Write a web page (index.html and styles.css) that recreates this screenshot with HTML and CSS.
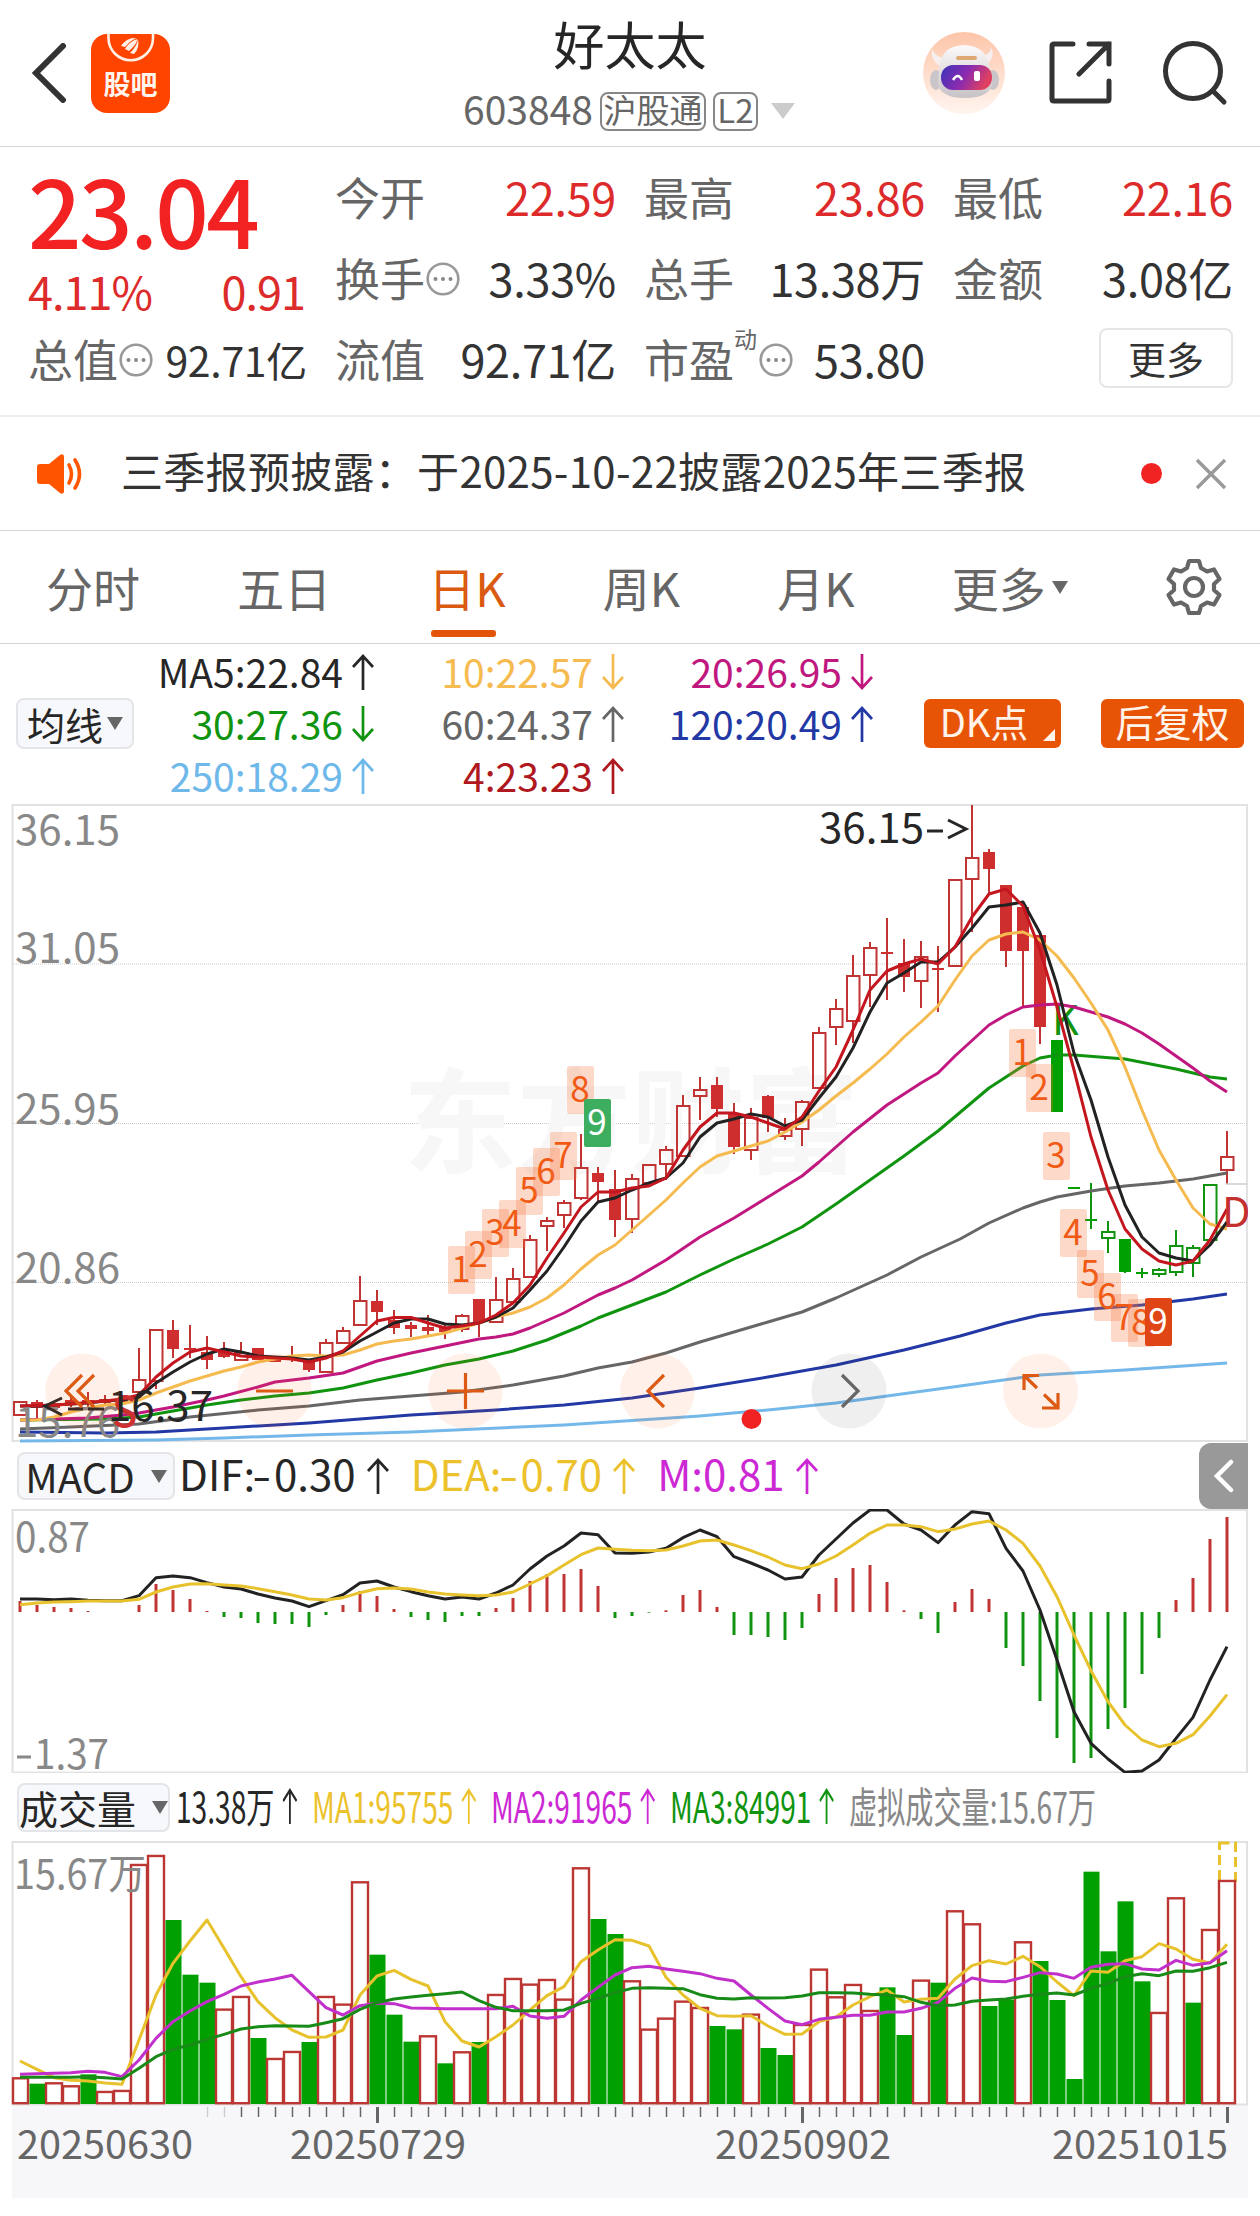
FILE: index.html
```
<!DOCTYPE html>
<html lang="zh-CN">
<head>
    <meta charset="UTF-8">
    <meta name="viewport" content="width=device-width, initial-scale=1.0">
    <title>好太太 603848</title>
    <link rel="stylesheet" href="styles.css">
</head>
<body>
    <svg class="defs" width="0" height="0">
        <symbol id="up" viewBox="0 0 22 36"><path d="M11 36V2M1 13L11 2L21 13" fill="none" stroke="currentColor" stroke-width="2.7"/></symbol>
        <symbol id="down" viewBox="0 0 22 36"><path d="M11 0V34M1 23L11 34L21 23" fill="none" stroke="currentColor" stroke-width="2.7"/></symbol>
        <symbol id="info" viewBox="0 0 34 34">
            <circle cx="17" cy="17" r="15.3" fill="none" stroke="#999" stroke-width="2.6"/>
            <circle cx="9.5" cy="17" r="2" fill="#888"/><circle cx="17" cy="17" r="2" fill="#888"/><circle cx="24.5" cy="17" r="2" fill="#888"/>
        </symbol>
    </svg>

    <header class="topbar">
        <div class="top-left">
            <svg class="back" width="36" height="60" viewBox="0 0 36 60"><path d="M32 3L5 30L32 57" fill="none" stroke="#333" stroke-width="6" stroke-linecap="round"/></svg>
            <div class="guba">
                <svg width="48" height="28" viewBox="0 0 48 28">
                    <path d="M1.5 0V4A22 22 0 0 0 46 4V0" fill="none" stroke="#fff0e6" stroke-width="2.6"/>
                    <path d="M14 12Q20 3 29 4Q23 7 18 13ZM18 15Q22 8 30 5Q31 9 22 17ZM23 19Q30 12 31 5Q33 14 27 20Z" fill="#fff0e6"/>
                </svg>
                <span>股吧</span>
            </div>
        </div>
        <div class="title">
            <h1>好太太</h1>
            <div class="code">
                <span class="num">603848</span><span class="tag">沪股通</span><span class="tag l2">L2</span><i class="tri light"></i>
            </div>
        </div>
        <div class="top-right">
            <svg width="84" height="84" viewBox="0 0 84 84">
                <defs>
                    <linearGradient id="halo" x1="0" y1="0" x2="0" y2="1"><stop offset="0" stop-color="#fdc5a8"/><stop offset="1" stop-color="#fff5ef"/></linearGradient>
                    <linearGradient id="visor" x1="0" y1="0" x2="1" y2="0.3"><stop offset="0" stop-color="#3a34b8"/><stop offset="0.55" stop-color="#8b2bb0"/><stop offset="1" stop-color="#e04060"/></linearGradient>
                    <linearGradient id="shell" x1="0" y1="0" x2="0" y2="1"><stop offset="0" stop-color="#fdfafa"/><stop offset="1" stop-color="#c6c2c6"/></linearGradient>
                </defs>
                <circle cx="42" cy="42" r="41" fill="url(#halo)"/>
                <path d="M10 18Q8 28 17 35L27 27Q14 28 10 18ZM69 16Q74 26 65 33L57 24Q68 26 69 16Z" fill="#f6efee"/>
                <ellipse cx="14" cy="49" rx="6" ry="10" fill="#c9c5c8"/><ellipse cx="71" cy="49" rx="6" ry="10" fill="#c9c5c8"/>
                <path d="M17 40Q18 14 43 14Q66 15 68 40L70 54Q66 67 43 67Q20 67 16 54Z" fill="url(#shell)"/>
                <rect x="34" y="25" width="21" height="4" rx="2" fill="#dda873"/>
                <rect x="19" y="34" width="51" height="25" rx="12" fill="url(#visor)"/>
                <path d="M31 49Q36 41 40 49" fill="none" stroke="#fff" stroke-width="2.5"/>
                <rect x="52" y="40" width="6" height="10" rx="2" fill="#fff"/>
            </svg>
            <svg width="64" height="64" viewBox="0 0 64 64"><path d="M24 3H5Q3 3 3 5V58Q3 60 5 60H58Q60 60 60 58V40M40 3H60V23M60 3L30 33" fill="none" stroke="#333" stroke-width="5" stroke-linecap="round"/></svg>
            <svg width="66" height="66" viewBox="0 0 66 66"><g fill="none" stroke="#333" stroke-width="5" stroke-linecap="round"><circle cx="31" cy="31" r="27.5"/><path d="M51 51L62 62"/></g></svg>
        </div>
    </header>

    <section class="quote">
        <div class="price-box">
            <div class="price">23.04</div>
            <div class="change"><span>4.11%</span><span>0.91</span></div>
        </div>
        <div class="cell"><label>今开</label><b class="red">22.59</b></div>
        <div class="cell"><label>最高</label><b class="red">23.86</b></div>
        <div class="cell"><label>最低</label><b class="red">22.16</b></div>
        <div class="cell"><label>换手<svg class="info"><use href="#info"/></svg></label><b>3.33%</b></div>
        <div class="cell"><label>总手</label><b>13.38万</b></div>
        <div class="cell"><label>金额</label><b>3.08亿</b></div>
        <div class="cell small"><label>总值<svg class="info"><use href="#info"/></svg></label><b>92.71亿</b></div>
        <div class="cell"><label>流值</label><b>92.71亿</b></div>
        <div class="cell"><label>市盈<sup>动</sup><svg class="info pe"><use href="#info"/></svg></label><b>53.80</b></div>
        <div class="cell end"><button class="more">更多</button></div>
    </section>

    <section class="notice">
        <svg width="50" height="40" viewBox="0 0 50 40">
            <path d="M0 13Q0 10 3 10H12L23 1Q27 -1 27 3V37Q27 41 23 39L12 30H3Q0 30 0 27Z" fill="#ff5500"/>
            <path d="M32 11Q37 20 32 29M38 6Q47 20 38 34" fill="none" stroke="#ff5500" stroke-width="3.6" stroke-linecap="round"/>
        </svg>
        <p>三季报预披露：于2025-10-22披露2025年三季报</p>
        <i class="dot"></i>
        <svg width="32" height="32" viewBox="0 0 32 32"><path d="M2 2L30 30M30 2L2 30" stroke="#999" stroke-width="3.4"/></svg>
    </section>

    <nav class="tabs">
        <a>分时</a>
        <a>五日</a>
        <a class="active">日K</a>
        <a>周K</a>
        <a>月K</a>
        <a>更多<i class="tri"></i></a>
        <svg width="58" height="58" viewBox="0 0 58 58">
            <path d="M24 3H34L36 10L42 13.5L49 11.5L54.500 21L49 26V32L54.500 37L49 46.500L42 44.500L36 48L34 55H24L22 48L16 44.500L9 46.500L3.500 37L9 32V26L3.500 21L9 11.500L16 13.500L22 10Z" fill="none" stroke="#666" stroke-width="4.200" stroke-linejoin="round"/>
            <circle cx="29" cy="29" r="9" fill="none" stroke="#666" stroke-width="4.200"/>
        </svg>
    </nav>

    <section class="ma-bar">
        <button class="pick">均线<i class="tri"></i></button>
        <div class="ma-grid">
            <span class="black">MA5:22.84<svg class="arrow"><use href="#up"/></svg></span>
            <span class="yellow">10:22.57<svg class="arrow"><use href="#down"/></svg></span>
            <span class="magenta">20:26.95<svg class="arrow"><use href="#down"/></svg></span>
            <span class="green">30:27.36<svg class="arrow"><use href="#down"/></svg></span>
            <span class="gray">60:24.37<svg class="arrow"><use href="#up"/></svg></span>
            <span class="blue">120:20.49<svg class="arrow"><use href="#up"/></svg></span>
            <span class="sky">250:18.29<svg class="arrow"><use href="#up"/></svg></span>
            <span class="crimson">4:23.23<svg class="arrow"><use href="#up"/></svg></span>
        </div>
        <button class="solid dk">DK点</button>
        <button class="solid">后复权</button>
    </section>

    <svg id="kline" width="1260" height="640" viewBox="0 803 1260 640"></svg>

    <section class="macd-bar">
        <button class="pick">MACD<i class="tri"></i></button>
        <div class="macd-legend">
            <span class="black">DIF:<em>-</em>0.30<svg class="arrow"><use href="#up"/></svg></span>
            <span class="gold">DEA:<em>-</em>0.70<svg class="arrow"><use href="#up"/></svg></span>
            <span class="purple">M:0.81<svg class="arrow"><use href="#up"/></svg></span>
        </div>
        <div class="drawer">
            <svg width="20" height="34" viewBox="0 0 20 34"><path d="M17 3L3 17L17 31" fill="none" stroke="#fff" stroke-width="4.500" stroke-linecap="round"/></svg>
        </div>
    </section>

    <svg id="macd" width="1260" height="264" viewBox="0 1509 1260 264"></svg>

    <section class="vol-bar">
        <button class="pick">成交量<i class="tri"></i></button>
        <div class="vol-legend">
            <span class="black">13.38万<svg class="arrow"><use href="#up"/></svg></span>
            <span class="gold">MA1:95755<svg class="arrow"><use href="#up"/></svg></span>
            <span class="purple">MA2:91965<svg class="arrow"><use href="#up"/></svg></span>
            <span class="green">MA3:84991<svg class="arrow"><use href="#up"/></svg></span>
            <span class="muted">虚拟成交量:15.67万</span>
        </div>
    </section>

    <svg id="volume" width="1260" height="357" viewBox="0 1841 1260 357"></svg>

    <script src="chart.js"></script>
</body>
</html>
```

FILE: styles.css
```
* {
    box-sizing: border-box;
}

body {
    margin: 0;
    width: 1260px;
    height: 2216px;
    background: #fff;
    color: #333;
    font-family: "Noto Sans CJK SC", "Noto Sans", sans-serif;
    overflow: hidden;
}

h1, p {
    margin: 0;
    font-weight: 400;
}

button {
    font-family: inherit;
    padding: 0;
    white-space: nowrap;
}

svg {
    display: block;
    flex: none;
}

.defs {
    position: absolute;
}

/* colours */
.black { color: #262626; }
.yellow { color: #f5bb50; }
.magenta { color: #c0187f; }
.green { color: #109410; }
.gray { color: #666; }
.blue { color: #2238a5; }
.sky { color: #6fb8ea; }
.crimson { color: #b01820; }
.gold { color: #ecc22c; }
.purple { color: #cc28d4; }
.muted { color: #888; }

.tri {
    display: inline-block;
    border-left: 8px solid transparent;
    border-right: 8px solid transparent;
    border-top: 13px solid #666;
}

.tri.light {
    border-width: 16px 12px 0;
    border-top-color: #ccc;
    margin-left: 13px;
}

.arrow {
    width: 22px;
    height: 36px;
}

/* top bar */
.topbar {
    display: grid;
    grid-template-columns: 1fr 400px 1fr;
    height: 147px;
    border-bottom: 1px solid #d4d4d4;
}

.top-left {
    display: flex;
    align-items: center;
    padding-left: 31px;
}

.guba {
    display: flex;
    flex-direction: column;
    align-items: center;
    width: 79px;
    height: 79px;
    margin-left: 24px;
    border-radius: 16px;
    background: #ff4400;
    color: #fff5ee;
}

.guba span {
    font-size: 27px;
    font-weight: 700;
    line-height: 40px;
    margin-top: 2px;
}

.title {
    text-align: center;
}

.title h1 {
    font-size: 51px;
    line-height: 60px;
    padding-top: 13px;
    color: #262626;
}

.code {
    display: flex;
    justify-content: center;
    align-items: center;
    height: 40px;
    margin-top: 18px;
    padding-right: 2px;
    color: #666;
}

.code .num {
    font-size: 39px;
    line-height: 36px;
    margin-top: -6px;
}

.tag {
    height: 39px;
    width: 106px;
    margin-left: 7px;
    border: 2px solid #888;
    border-radius: 8px;
    font-size: 33px;
    line-height: 30px;
}

.tag.l2 {
    width: 45px;
}

.top-right {
    display: flex;
    align-items: center;
    justify-content: flex-end;
    padding-right: 32px;
}

.top-right svg:nth-child(2) {
    margin: 0 49px 0 43px;
}

/* quote */
.quote {
    display: grid;
    grid-template-columns: 279px 281px 281px 280px;
    grid-template-rows: 81px 81px 81px;
    column-gap: 28px;
    height: 270px;
    padding: 12px 26px 0 28px;
    border-bottom: 2px solid #eee;
}

.price-box {
    grid-row: span 2;
    color: #f22222;
}

.price {
    font-size: 94px;
    font-weight: 500;
    line-height: 94px;
    letter-spacing: -2.6px;
    margin-top: 2px;
}

.change {
    display: flex;
    justify-content: space-between;
    padding-right: 2px;
    color: #dd2b2b;
    font-size: 45px;
    line-height: 50px;
    letter-spacing: -1px;
    margin-top: 11px;
}

.cell {
    display: flex;
    align-items: center;
    justify-content: space-between;
    font-size: 45px;
    line-height: 76px;
    height: 76px;
    white-space: nowrap;
}

.cell label {
    display: flex;
    align-items: center;
    color: #666;
}

.cell b {
    font-weight: 400;
    letter-spacing: -0.3px;
}

.cell .red {
    color: #dd2b2b;
}

.cell.small b {
    font-size: 41px;
}

.cell.end {
    justify-content: flex-end;
}

.cell sup {
    align-self: flex-start;
    font-size: 23px;
    line-height: 24px;
    margin-top: 5px;
}

.info {
    width: 34px;
    height: 34px;
    margin: 1px 0 0 1px;
}

.info.pe {
    margin-left: 2px;
}

.more {
    width: 134px;
    height: 60px;
    margin-top: -2px;
    border: 2px solid #e6e6e6;
    border-radius: 8px;
    background: #fff;
    color: #333;
    font-size: 38px;
    line-height: 50px;
}

/* notice */
.notice {
    display: flex;
    align-items: center;
    height: 114px;
    padding: 0 33px 0 37px;
    border-bottom: 1px solid #d4d4d4;
}

.notice p {
    flex: 1;
    margin: -8px 0 0 34px;
    font-size: 42px;
    letter-spacing: 0.3px;
    white-space: nowrap;
}

.notice .dot {
    width: 21px;
    height: 21px;
    margin-right: 33px;
    border-radius: 50%;
    background: #f02222;
}

/* tabs */
.tabs {
    display: flex;
    align-items: center;
    justify-content: space-between;
    height: 113px;
    padding: 0 37px 0 46px;
    border-bottom: 1px solid #d4d4d4;
    color: #666;
    font-size: 47px;
}

.tabs a {
    display: flex;
    align-items: center;
    line-height: 100px;
    height: 106px;
}

.tabs .active {
    position: relative;
    color: #d95a10;
}

.tabs .active::after {
    content: "";
    position: absolute;
    left: 3px;
    bottom: 3px;
    width: 65px;
    height: 7px;
    border-radius: 3px;
    background: #e35408;
}

.tabs .tri {
    margin-left: 6px;
}

/* moving averages */
.ma-bar {
    display: flex;
    align-items: center;
    height: 159px;
    padding: 0 16px;
}

.pick {
    display: flex;
    align-items: center;
    justify-content: center;
    width: 118px;
    height: 51px;
    border: 2px solid #e3e5e8;
    border-radius: 8px;
    background: #f7f8fb;
    color: #262626;
    font-size: 38px;
    line-height: 40px;
}

.pick .tri {
    margin-left: 4px;
}

.ma-grid {
    display: grid;
    grid-template-columns: 240px 250px 249px;
    grid-auto-rows: 52px;
    height: 156px;
    margin-top: -1px;
    font-size: 39px;
    line-height: 46px;
}

.ma-grid span {
    display: flex;
    justify-content: flex-end;
    align-items: center;
    height: 52px;
}

.ma-grid .arrow {
    margin: 2px 0 0 9px;
}

.solid {
    width: 143px;
    height: 49px;
    border: 0;
    border-radius: 6px;
    background: #e85405;
    color: #fff3ea;
    font-size: 38px;
    line-height: 44px;
    padding-bottom: 5px;
}

.dk {
    position: relative;
    width: 137px;
    margin: 0 40px 0 51px;
    padding-right: 17px;
}

.dk::after {
    content: "";
    position: absolute;
    right: 6px;
    bottom: 7px;
    border-left: 12px solid transparent;
    border-bottom: 12px solid #fff3ea;
}

/* sub indicators */
.macd-bar, .vol-bar {
    display: flex;
    align-items: center;
    height: 66px;
    padding-left: 17px;
    font-size: 42px;
    line-height: 50px;
}

.macd-bar .pick {
    width: 158px;
    height: 48px;
    font-size: 40px;
}

.macd-bar .pick .tri, .vol-bar .pick .tri {
    margin-left: 16px;
}

.macd-legend {
    display: flex;
    gap: 22px;
    margin: -6px 0 0 4px;
}

.macd-legend span, .vol-legend span {
    display: flex;
    align-items: center;
}

.macd-legend em {
    font-style: normal;
    width: 19px;
    transform: scaleX(1.3);
}

.macd-legend .arrow {
    margin: 6px 0 0 11px;
}

.drawer {
    display: flex;
    align-items: center;
    justify-content: center;
    width: 49px;
    height: 66px;
    margin-left: auto;
    margin-right: 12px;
    border-radius: 12px 0 0 12px;
    background: #999;
}

.vol-bar {
    height: 68px;
}

.vol-bar .pick {
    width: 163px;
    height: 49px;
    font-size: 39px;
}

.vol-legend {
    display: flex;
    gap: 22px;
    margin: -4px 0 0 6px;
    transform: scaleX(0.67);
    transform-origin: left;
    white-space: nowrap;
}

.vol-legend .arrow {
    margin: 2px 0 0 12px;
}

/* charts */
.axis-label {
    font-size: 41.5px;
    fill: #888;
}

.mark {
    font-size: 41.5px;
    fill: #262626;
}

.date {
    font-size: 39.5px;
    fill: #666;
}

.watermark {
    font-size: 114px;
    font-weight: 700;
    fill: #f7f7f7;
}

.count {
    font-size: 35px;
    fill: #f05a14;
    text-anchor: middle;
}

.count.on {
    fill: #fff;
}

.line {
    fill: none;
    stroke-width: 2.8;
    stroke-linejoin: round;
}
```

FILE: chart.js
```
const RED = '#c03434';
const FILL_RED = '#cf2e2e';
const GREEN = '#109410';
const FILL_GREEN = '#00a000';

const cx = i => 20 + 17 * i;

const svgTag = (name, attrs, text = '') => {
    const list = Object.entries(attrs).map(([k, v]) => `${k}="${v}"`).join(' ');
    return `<${name} ${list}>${text}</${name}>`;
};
const rect = (x, y, width, height, rest) => svgTag('rect', { x, y, width, height, ...rest });
const seg = (x1, y1, x2, y2, stroke, w = 2) => svgTag('line', { x1, y1, x2, y2, stroke, 'stroke-width': w });
const label = (x, y, cls, text, rest) => svgTag('text', { x, y, class: cls, ...rest }, text);
const wide = length => ({ textLength: length, lengthAdjust: 'spacingAndGlyphs' });
const path = (points, stroke, w = 2.8) => svgTag('polyline', {
    class: 'line', stroke, style: `stroke-width:${w}`, points: points.map(p => p.join(',')).join(' ')
});
const frame = (y, h) => rect(12.5, y, 1234.5, h, { fill: 'none', stroke: '#e2e2e2', 'stroke-width': 2 });

// ===== K line =====
// kind, high, body top, body bottom, low
const candles = [
    ['h',1401,1401,1416,1416], ['s',1400,1402,1408,1418], ['s',1402,1404,1408,1412], ['s',1397,1400,1405,1407],
    ['s',1392,1400,1404,1407], ['s',1395,1399,1403,1405], ['s',1395,1399,1402,1405], ['h',1348,1379,1393,1394],
    ['h',1329,1329,1382,1389], ['s',1320,1330,1349,1358], ['s',1325,1348,1350,1358], ['s',1336,1352,1360,1369],
    ['s',1342,1351,1357,1358], ['h',1342,1352,1361,1361], ['s',1348,1348,1360,1360], ['s',1356,1356,1362,1362],
    ['s',1346,1357,1360,1362], ['s',1359,1359,1370,1372], ['h',1339,1342,1373,1373], ['h',1327,1330,1344,1344],
    ['h',1276,1300,1326,1326], ['s',1290,1301,1312,1325], ['s',1310,1320,1328,1334], ['s',1322,1325,1329,1337],
    ['s',1315,1327,1331,1335], ['s',1325,1327,1332,1339], ['h',1314,1315,1330,1332], ['s',1299,1299,1322,1337],
    ['h',1277,1299,1323,1323], ['h',1268,1278,1303,1303], ['h',1235,1239,1278,1278], ['h',1217,1220,1227,1251],
    ['h',1200,1202,1216,1228], ['h',1134,1167,1199,1200], ['s',1167,1173,1182,1202], ['s',1170,1189,1220,1237],
    ['h',1174,1178,1220,1233], ['h',1164,1164,1184,1184], ['h',1146,1149,1165,1180], ['h',1095,1105,1157,1157],
    ['h',1077,1089,1097,1120], ['s',1077,1085,1109,1117], ['s',1103,1113,1147,1154], ['h',1108,1117,1151,1160],
    ['s',1095,1096,1118,1132], ['h',1118,1129,1137,1140], ['h',1100,1101,1130,1146], ['h',1027,1032,1089,1089],
    ['h',999,1008,1028,1045], ['h',955,975,1022,1043], ['h',942,947,976,1007], ['s',918,952,954,1000],
    ['s',939,963,977,992], ['h',941,956,982,1008], ['s',946,968,970,1012], ['h',879,879,967,967],
    ['h',805,857,880,932], ['s',849,852,869,893], ['s',885,885,951,967], ['s',907,907,951,1007],
    ['s',935,935,1027,1044], ['G',1040,1040,1112,1112], ['G',1187,1187,1189,1189], ['G',1183,1219,1221,1229],
    ['g',1221,1231,1239,1253], ['G',1239,1239,1272,1273], ['G',1268,1272,1274,1278], ['g',1268,1269,1275,1277],
    ['g',1230,1245,1273,1276], ['g',1245,1247,1264,1277], ['g',1184,1184,1241,1241], ['h',1131,1156,1171,1184]
];

// sparse averages are [index, y] pairs, dense ones hold one y per candle
const ma4 = [1406,1405.5,1405,1404,1402.5,1401,1399,1395,1377,1363,1352,1348,1352,1356,1357,1358,1359,1362,1358,1351,1336,1321,1317.5,1317.5,
    1323,1328,1326,1323,1315,1303,1285,1258,1233,1207,1192,1192,1188,1186,1178,1150,1127,1113,1113,1117,1123,1129,1117,1091,
    1067,1030,990,971,964,959,964,947,917,894,889,906,950,1007,1070,1137,1190,1229,1249,1261,1265,1261,1240,1209];
const ma5 = [1406,1406,1405,1404,1403,1401,1400,1397,1383,1372,1362,1354,1349,1352,1356,1357,1358,1360,1357,1352,1341,1332,1323,1319,
    1319,1324,1325,1323,1317,1308,1290,1271,1247,1221,1202,1198,1190,1183,1178,1163,1137,1123,1119,1114,1117,1126,1120,1098,
    1077,1048,1012,983,973,962,962,947,928,907,905,902,933,985,1053,1100,1157,1205,1237,1253,1258,1261,1245,1222];
const ma10 = [1420,1420,1417,1412,1408,1405,1404,1400,1393,1387,1381,1376,1371,1367,1362,1359,1356,1355,1356,1355,1350,1344,1341,1339,
    1336,1333,1328,1323,1317,1313,1307,1298,1285,1269,1255,1245,1230,1215,1200,1183,1167,1156,1151,1146,1141,1132,1122,1110,
    1096,1083,1069,1054,1037,1022,1006,980,956,940,934,932,940,956,978,1003,1030,1067,1110,1150,1180,1208,1224,1229];
const ma20 = [[0,1420],[4,1418],[6,1415],[7,1413],[9,1407],[11,1400],[12,1396],[14,1387],[15,1382],[17,1378],[19,1373],[21,1361],[23,1353],
    [25,1346],[27,1339],[28,1337],[29,1334],[30,1328],[32,1313],[34,1295],[35,1288],[36,1280],[38,1260],[40,1237],[42,1218],[44,1197],
    [46,1176],[47,1162],[49,1132],[51,1105],[53,1083],[54,1073],[55,1056],[57,1025],[58,1015],[59,1007],[60,1005],[61,1004],[62,1007],
    [64,1017],[65,1024],[66,1033],[67,1044],[68,1056],[69,1068],[70,1081],[71,1092]];
const ma30 = [[0,1420],[5,1419],[7,1417],[9,1411],[11,1405],[13,1400],[15,1396],[17,1393],[19,1388],[21,1380],[23,1373],[25,1365],[27,1359],
    [29,1351],[31,1340],[32,1333],[33,1326],[34,1318],[36,1305],[38,1292],[40,1275],[42,1259],[44,1244],[46,1227],[48,1204],[50,1180],
    [52,1156],[54,1131],[57,1088],[58,1077],[59,1066],[60,1058],[61,1055],[62,1055],[65,1059],[68,1069],[70,1077],[71,1079]];
const ma60 = [[0,1429],[3,1427],[7,1424],[10,1417],[14,1410],[17,1406],[20,1400],[23,1396],[26,1392],[29,1385],[32,1376],[34,1368],[36,1362],
    [38,1353],[40,1342],[42,1332],[44,1322],[46,1312],[48,1298],[51,1275],[53,1257],[55.3,1239],[57,1223],[59,1208],[60,1202],[61,1197],
    [63,1191],[65,1186],[67,1183],[69,1179],[71,1173]];
const ma120 = [[0,1432],[5,1433],[8,1432],[12,1428],[17,1423],[23,1415],[28,1410],[32,1405],[36,1398],[40,1388],[44,1377],[48,1365],
    [52,1350],[55.3,1336],[58,1323],[60,1315],[63,1309],[66,1305],[69,1299],[71,1294]];
const ma250 = [[0,1441],[8,1440],[12,1438],[17,1435],[23,1432],[32,1425],[40,1416],[44,1410],[48,1403],[55.3,1386],[60,1375],[65,1370],[71,1363]];

const dense = arr => arr.map((y, i) => [cx(i), y]);
const sparse = arr => arr.map(([i, y]) => [cx(i), y]);

// candle index, box top, digit
const counts = [
    [26,1246,1],[27,1231,2],[28,1209,3],[29,1200,4],[30,1167,5],[31,1148,6],[32,1132,7],[33,1066,8],[34,1099,9,'#3dae60'],
    [59,1029,1],[60,1064,2],[61,1132,3],[62,1209,4],[63,1250,5],[64,1273,6],[65,1294,7],[66,1299,8],[67,1298,9,'#e04515']
];

function drawCandle([kind, high, top, bottom, low], i) {
    const x = cx(i);
    const up = kind === 'h' || kind === 's';
    const color = up ? RED : GREEN;
    let out = '';
    if (high < top) out += seg(x, high, x, top, color);
    if (low > bottom) out += seg(x, bottom, x, low, color);
    if (kind === 's' || kind === 'G') {
        out += rect(x - 6, top, 12, bottom - top, { fill: up ? FILL_RED : FILL_GREEN });
    } else {
        out += rect(x - 6, top + 1, 12.5, Math.max(bottom - top - 2, 2), { fill: 'none', stroke: color, 'stroke-width': 2 });
    }
    return out;
}

function drawKline() {
    let out = frame(805, 636);
    [964, 1123.5, 1282.5].forEach(y => {
        out += svgTag('line', { x1: 12, x2: 1247, y1: y, y2: y, stroke: '#ccc', 'stroke-dasharray': '1 1' });
    });
    out += label(403, 1164, 'watermark', '东方财富', wide(456));
    out += label(15, 845, 'axis-label', '36.15', wide(105));
    out += label(15, 963, 'axis-label', '31.05', wide(105));
    out += label(15, 1123.5, 'axis-label', '25.95', wide(105));
    out += label(15, 1282.5, 'axis-label', '20.86', wide(105));
    out += candles.map(drawCandle).join('');

    out += label(1052, 1035, 'mark', 'K', { style: 'fill:#109410' });
    out += path(sparse(ma250), '#74b8ea', 3);
    out += path(sparse(ma120), '#2238a5', 3);
    out += path(sparse(ma60), '#666', 3);
    out += path(sparse(ma30), GREEN, 3);
    out += path(sparse(ma20), '#c0187f', 3);
    out += path(dense(ma10), '#f5bb50', 3);
    out += path(dense(ma5), '#222', 3);
    out += path(dense(ma4), '#c4161e', 3);

    counts.forEach(([i, y, n, fill]) => {
        out += rect(cx(i) - 14, y, 27, 48, { rx: 2, fill: fill || '#f9753c', opacity: fill ? 1 : 0.28 });
        out += label(cx(i) - 1, y + 36, fill ? 'count on' : 'count', n);
    });

    out += seg(1226, 1184, 1247, 1184, '#ccc', 1.5);
    out += `<svg x="1200" y="1190" width="48" height="50">${label(22, 37, 'mark', 'D', { style: 'fill:#c43030' })}</svg>`;
    out += label(819, 843, 'mark', '36.15', wide(105));
    out += seg(927, 831, 943, 831, '#262626', 3);
    out += svgTag('path', { d: 'M948 820L966 829L948 838', fill: 'none', stroke: '#262626', 'stroke-width': 3 });

    // bottom-left corner: lowest price, sell mark and axis minimum
    out += label(15, 1437, 'axis-label', '15.76', wide(105));
    out += label(112, 1427, 'mark', 'S', { style: 'fill:#cc3030;font-weight:500' });
    out += label(108, 1421, 'mark', '16.37', wide(105));
    out += svgTag('path', { d: 'M62 1398L45 1406L62 1415M68 1409H83M88 1409H104', fill: 'none', stroke: '#262626', 'stroke-width': 3 });

    // floating controls
    [82.5, 274.5, 465.5, 657.5, 849, 1040.5].forEach((x, n) => {
        out += svgTag('circle', { cx: x, cy: 1391, r: 37.5, fill: n === 4 ? '#333' : '#fa6414', opacity: n === 4 ? 0.08 : 0.09 });
    });
    const icon = (d, stroke = '#dc5a14') => svgTag('path', { d, fill: 'none', stroke, 'stroke-width': 3.2 });
    out += icon('M82 1375L66 1391L82 1407M94 1375L78 1391L94 1407');
    out += icon('M256 1391H293');
    out += icon('M447 1391H484M465.500 1373V1409');
    out += icon('M664 1375L648 1391L664 1407');
    out += icon('M842 1375L858 1391L842 1407', '#666');
    out += icon('M1024 1390V1375.500H1039M1024 1375.500L1037 1388M1058 1393V1408H1042M1058 1408L1044 1394.500');
    out += svgTag('circle', { cx: 751.5, cy: 1419, r: 10, fill: '#f02222' });
    document.getElementById('kline').innerHTML = out;
}

// ===== MACD =====
// stored in thirds of a pixel below the panel origin
const bars = [513,525,531,534,543,546,546,525,462,480,507,543,561,564,579,582,582,591,555,525,483,498,537,561,570,576,558,558,534,504,453,432,432,417,468,564,
    558,548,541,495,480,531,615,615,621,630,594,492,444,414,405,456,541,567,609,516,477,507,654,708,813,924,999,984,897,834,732,624,510,444,327,261];
const dif = [507,507,509,507,511,512,512,497,443,438,443,458,471,477,492,504,513,530,512,494,459,453,471,485,497,507,501,507,489,465,417,378,348,309,314,369,
    370,366,355,323,300,320,380,399,420,447,441,375,327,279,240,240,282,300,338,285,245,251,355,423,540,690,845,940,987,1027,1023,990,925,862,750,650];
const dea = [524,519,516,515,513,513,513,508,486,471,462,461,465,468,476,485,495,507,510,503,488,476,474,477,486,492,495,497,495,486,462,437,405,374,354,358,
    361,362,360,348,333,330,345,362,381,405,416,402,378,345,310,285,285,290,305,297,282,273,300,340,408,500,615,722,815,885,930,950,940,914,858,794];

function drawMacd() {
    const y = v => 1430 + v / 3;
    let out = frame(1510, 262.5);
    out += label(15, 1552, 'axis-label', '0.87', wide(75));
    out += label(34, 1769, 'axis-label', '1.37', wide(75));
    out += seg(17, 1757, 31, 1757, '#888', 3);
    bars.forEach((v, i) => {
        if (v !== 546) out += seg(cx(i), 1612, cx(i), y(v), v < 546 ? RED : GREEN, 3);
    });
    out += path(dif.map((v, i) => [cx(i), y(v)]), '#222', 3);
    out += path(dea.map((v, i) => [cx(i), y(v)]), '#e8c22c', 3);
    document.getElementById('macd').innerHTML = out;
}

// ===== Volume =====
const volTop = [891,911,906,915,883,932,929,251,224,420,584,608,685,647,774,833,812,786,647,670,303,524,704,785,765,850,813,786,641,593,610,596,655,261,417,462,
    600,745,712,661,680,738,748,700,804,825,731,565,648,611,689,622,765,598,608,390,429,678,660,483,543,660,897,275,514,364,604,695,351,668,446,299];
const volKind = 'rgrrgrrrrgggrrgrrgrrrgggrgrgrrrrrrggrrrrrggrggrrrrrggrgrrggrgggggggrrgrr';
const volMa1 = [843,868,893,901,903,909,913,780,645,550,483,420,505,590,665,713,750,772,771,750,645,588,571,598,618,725,783,801,770,735,690,647,620,545,510,479,
    481,498,592,645,685,707,709,707,738,763,762,725,711,675,650,630,666,658,655,597,557,542,552,529,560,606,647,573,577,542,530,491,507,538,549,493];
const volMa2 = [883,881,880,878,874,877,890,840,775,725,693,665,643,618,606,597,586,635,683,705,677,670,671,684,685,686,686,686,686,679,708,715,709,660,622,585,
    563,559,567,574,581,595,603,645,685,723,734,718,712,706,706,696,696,685,667,625,594,604,605,592,578,582,595,562,553,551,567,570,541,556,548,512];
const volMa3 = [892,892,892,892,890,893,897,865,830,808,795,778,763,747,740,737,738,739,728,716,688,668,657,651,646,641,636,662,682,692,692,692,690,670,655,638,
    625,623,625,626,644,655,657,653,654,653,648,638,638,639,643,645,650,667,677,675,664,660,657,649,643,639,645,625,610,590,581,587,573,574,563,547];

function drawVolume() {
    const y = v => 1780 + v / 3;
    let out = rect(12, 2105, 1236, 93, { fill: '#f7f7fa' }) + frame(1842, 262.5);
    const dash = { fill: 'none', stroke: '#e8c22c', 'stroke-width': 3, 'stroke-dasharray': '10 5' };
    out += rect(1219.5, 1843, 16, 40, dash);
    volTop.forEach((v, i) => {
        const x = cx(i);
        if (volKind[i] === 'g') {
            out += rect(x - 7.5, y(v), 16, 2104 - y(v), { fill: FILL_GREEN });
        } else {
            const left = i ? x - 8 : 13;
            out += rect(left, y(v) + 1.3, x + 8 - left, 2102.7 - y(v) - 0.8, { fill: '#fff', stroke: '#bc3633', 'stroke-width': 2.4 });
        }
    });
    out += path(volMa1.map((v, i) => [cx(i), y(v)]), '#e8c22c', 3);
    out += path(volMa2.map((v, i) => [cx(i), y(v)]), '#c230cc', 3);
    out += path(volMa3.map((v, i) => [cx(i), y(v)]), '#188a18', 3);
    out += label(14, 1889, 'axis-label', '15.67万', wide(132));

    for (let i = 11; i < 72; i++) {
        const major = i === 21 || i === 46 || i === 71;
        const x = cx(i) + 0.5;
        out += seg(x, 2107, x, major ? 2123 : 2117, i < 13 ? '#ccc' : '#666', major ? 3 : 1.5);
    }
    [[17, '20250630'], [290, '20250729'], [715, '20250902'], [1052, '20251015']].forEach(([x, d]) => {
        out += label(x, 2159, 'date', d, wide(176));
    });
    document.getElementById('volume').innerHTML = out;
}

drawKline();
drawMacd();
drawVolume();
```
